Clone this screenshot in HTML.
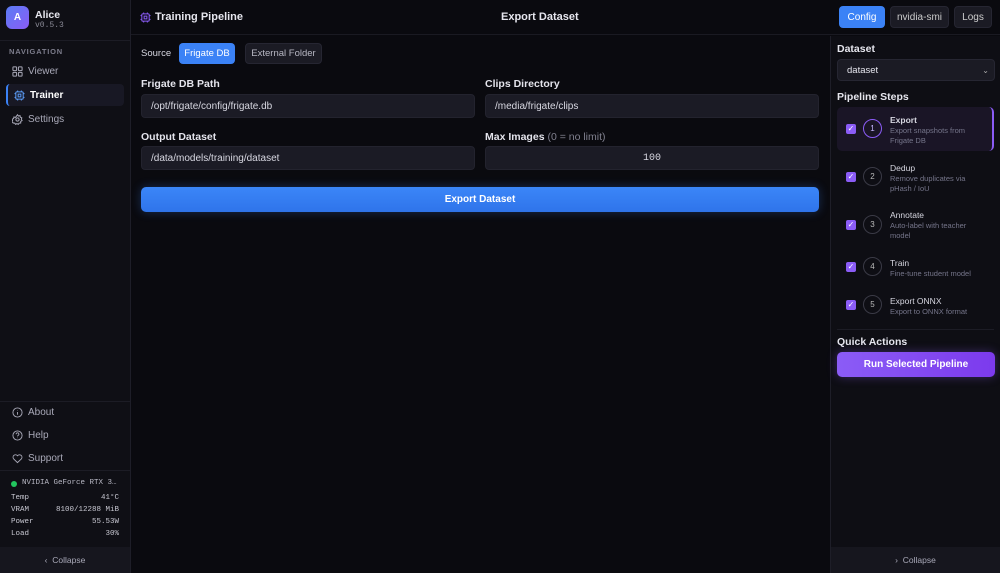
<!DOCTYPE html>
<html><head><meta charset="utf-8"><style>
*{box-sizing:border-box;margin:0;padding:0}
body{width:1000px;height:573px;overflow:hidden;background:#0a0a0f;font-family:"Liberation Sans",sans-serif;color:#e6e6ee;position:relative;font-size:11px}
.mono{font-family:"Liberation Mono",monospace}
.c{display:flex;align-items:center;justify-content:center}
#side{position:absolute;left:0;top:0;width:131px;height:573px;background:#0f0f15;border-right:1px solid #1e1e28}
.logo{position:absolute;left:6px;top:6px;width:23px;height:23px;border-radius:6px;background:linear-gradient(135deg,#5a7cf5,#8b5cf6);color:#fff;font-weight:bold;font-size:10px;text-align:center;line-height:23px}
.nav{position:absolute;left:6px;width:118px;height:22px;display:flex;align-items:center;padding-left:6px;gap:5px;color:#a9a9b8;font-size:10px}
.nav svg{width:11px;height:11px}
#head{position:absolute;left:131px;top:0;width:869px;height:35px;border-bottom:1px solid #1a1a22}
.lbl{position:absolute;font-size:10.5px;font-weight:bold;color:#e4e4ec}
.inp{position:absolute;height:24px;background:#1b1b25;border:1px solid #23232e;border-radius:4px;font-size:10px;color:#d8d8e2;padding-left:9px;display:flex;align-items:center}
#right{position:absolute;left:830px;top:36px;width:170px;height:537px;background:#0e0e14;border-left:1px solid #1e1e28}
.step{position:absolute;left:6px;width:157px;height:42px}
.cb{position:absolute;left:9px;width:10px;height:10px;background:#8b5cf6;border-radius:2px;color:#fff;font-size:8px;line-height:10px;text-align:center}
.num{position:absolute;left:26px;width:19px;height:19px;border:1.5px solid #3a3a46;border-radius:50%;font-size:8px;color:#bbb}
.st{position:absolute;left:53px;font-size:8.5px;color:#d6d6e0}
.sd{position:absolute;left:53px;font-size:7.5px;color:#75758a;line-height:10px;width:88px}
</style></head><body>
<div id="side">
 <div class="logo">A</div>
 <div style="position:absolute;left:35px;top:9px;font-size:10.5px;font-weight:bold">Alice</div>
 <div class="mono" style="position:absolute;left:35px;top:21px;font-size:8px;color:#8a8a96">v0.5.3</div>
 <div style="position:absolute;left:0;top:40px;width:130px;border-top:1px solid #1c1c25"></div>
 <div style="position:absolute;left:9px;top:47px;font-size:7.5px;color:#7d7d8c;letter-spacing:.8px;font-weight:bold">NAVIGATION</div>
 <div class="nav" style="top:60px"><svg viewBox="0 0 12 12" fill="none" stroke="#a9a9b8" stroke-width="1.1"><rect x="1" y="1" width="4" height="4" rx=".7"/><rect x="7" y="1" width="4" height="4" rx=".7"/><rect x="1" y="7" width="4" height="4" rx=".7"/><rect x="7" y="7" width="4" height="4" rx=".7"/></svg>Viewer</div>
 <div class="nav" style="top:84px;background:#181824;border-left:2px solid #3b82f6;border-radius:4px;color:#fff;font-weight:bold"><svg viewBox="0 0 12 12" fill="none" stroke="#5b9cf8" stroke-width="1.1"><rect x="2" y="2" width="8" height="8" rx="1"/><rect x="4.5" y="4.5" width="3" height="3"/><path d="M4 0.5v1.5M8 0.5v1.5M4 10v1.5M8 10v1.5M0.5 4h1.5M0.5 8h1.5M10 4h1.5M10 8h1.5"/></svg>Trainer</div>
 <div class="nav" style="top:108px"><svg viewBox="0 0 12 12" fill="none" stroke="#a9a9b8" stroke-width="1.1"><circle cx="6" cy="6" r="1.8"/><path d="M6 .8l1 1.4 1.7-.4.4 1.7 1.6.7-.6 1.6.9 1.4-1.5.9v1.7l-1.7.1-.9 1.4-1.5-.8-1.5.8-.9-1.4-1.7-.1V9.6l-1.5-.9.9-1.4-.6-1.6 1.6-.7.4-1.7 1.7.4z"/></svg>Settings</div>
 <div style="position:absolute;left:0;top:401px;width:130px;border-top:1px solid #1c1c25"></div>
 <div class="nav" style="top:401px"><svg viewBox="0 0 12 12" fill="none" stroke="#a9a9b8" stroke-width="1"><circle cx="6" cy="6" r="5"/><path d="M6 5.5v3M6 3.5v.5"/></svg>About</div>
 <div class="nav" style="top:424px"><svg viewBox="0 0 12 12" fill="none" stroke="#a9a9b8" stroke-width="1"><circle cx="6" cy="6" r="5"/><path d="M4.5 4.6a1.5 1.5 0 1 1 2 1.4c-.4.2-.5.5-.5.9M6 8.5v.4"/></svg>Help</div>
 <div class="nav" style="top:447px"><svg viewBox="0 0 12 12" fill="none" stroke="#a9a9b8" stroke-width="1"><path d="M6 10.5L1.7 6.3A2.6 2.6 0 0 1 6 3a2.6 2.6 0 0 1 4.3 3.3z"/></svg>Support</div>
 <div style="position:absolute;left:0;top:470px;width:130px;border-top:1px solid #1c1c25"></div>
 <div style="position:absolute;left:11px;top:481px;width:6px;height:6px;border-radius:50%;background:#22c55e"></div>
 <div class="mono" style="position:absolute;left:22px;top:479px;font-size:7.5px;color:#b8b8c4">NVIDIA GeForce RTX 3…</div>
 <div class="mono" style="position:absolute;left:11px;top:492px;width:108px;font-size:7.5px;line-height:12px;color:#c8c8d2">
  <div style="display:flex;justify-content:space-between"><span>Temp</span><span>41°C</span></div>
  <div style="display:flex;justify-content:space-between"><span>VRAM</span><span>8100/12288 MiB</span></div>
  <div style="display:flex;justify-content:space-between"><span>Power</span><span>55.53W</span></div>
  <div style="display:flex;justify-content:space-between"><span>Load</span><span>30%</span></div>
 </div>
 <div class="c" style="position:absolute;left:0;top:547px;width:130px;height:26px;background:#16161e;font-size:8.5px;color:#a9a9b8">‹&nbsp; Collapse</div>
</div>
<div id="head">
 <svg style="position:absolute;left:9px;top:12px" width="11" height="11" viewBox="0 0 12 12" fill="none" stroke="#8b5cf6" stroke-width="1.1"><rect x="2" y="2" width="8" height="8" rx="1"/><rect x="4.5" y="4.5" width="3" height="3"/><path d="M4 0.5v1.5M8 0.5v1.5M4 10v1.5M8 10v1.5M0.5 4h1.5M0.5 8h1.5M10 4h1.5M10 8h1.5"/></svg>
 <div style="position:absolute;left:24px;top:11px;font-size:11px;font-weight:bold">Training Pipeline</div>
 <div style="position:absolute;left:370px;top:11px;font-size:11px;font-weight:bold">Export Dataset</div>
 <div class="c" style="position:absolute;left:708px;top:6px;width:46px;height:22px;background:#3b82f6;border-radius:4px;font-size:10px;color:#fff">Config</div>
 <div class="c" style="position:absolute;left:759px;top:6px;width:59px;height:22px;background:#1b1b24;border:1px solid #262632;border-radius:4px;font-size:10px;color:#ccc">nvidia-smi</div>
 <div class="c" style="position:absolute;left:823px;top:6px;width:38px;height:22px;background:#1b1b24;border:1px solid #262632;border-radius:4px;font-size:10px;color:#ccc">Logs</div>
</div>
<div style="position:absolute;left:141px;top:48px;font-size:9.5px;color:#d8d8e2">Source</div>
<div class="c" style="position:absolute;left:179px;top:43px;width:56px;height:21px;background:#3b82f6;border-radius:4px;font-size:9.5px;color:#fff">Frigate DB</div>
<div class="c" style="position:absolute;left:245px;top:43px;width:77px;height:21px;background:#1b1b24;border:1px solid #262632;border-radius:4px;font-size:9.5px;color:#b8b8c4">External Folder</div>
<div class="lbl" style="left:141px;top:78px">Frigate DB Path</div>
<div class="inp" style="left:141px;top:94px;width:334px">/opt/frigate/config/frigate.db</div>
<div class="lbl" style="left:485px;top:78px">Clips Directory</div>
<div class="inp" style="left:485px;top:94px;width:334px">/media/frigate/clips</div>
<div class="lbl" style="left:141px;top:131px">Output Dataset</div>
<div class="inp" style="left:141px;top:146px;width:334px">/data/models/training/dataset</div>
<div class="lbl" style="left:485px;top:131px">Max Images <span style="font-weight:normal;color:#80808e">(0 = no limit)</span></div>
<div class="inp mono c" style="left:485px;top:146px;width:334px;padding:0">100</div>
<div class="c" style="position:absolute;left:141px;top:187px;width:678px;height:25px;background:linear-gradient(#3b86f8,#2f74ea);border-radius:5px;font-size:10px;font-weight:bold;color:#fff;box-shadow:0 0 10px rgba(59,130,246,.3)">Export Dataset</div>
<div id="right">
 <div style="position:absolute;left:6px;top:7px;font-size:10.5px;font-weight:bold">Dataset</div>
 <div style="position:absolute;left:6px;top:23px;width:158px;height:22px;background:#1b1b24;border:1px solid #262632;border-radius:4px;font-size:9.5px;padding-left:9px;display:flex;align-items:center">dataset<span style="position:absolute;right:5px;font-size:8px;color:#aaa">⌄</span></div>
 <div style="position:absolute;left:6px;top:55px;font-size:10.5px;font-weight:bold">Pipeline Steps</div>
 <div class="step" style="top:71px;height:44px;background:#1a1526;border-right:2px solid #8b5cf6;border-radius:5px">
  <div class="cb" style="top:17px">✓</div><div class="num c" style="top:12px;border-color:#8b5cf6;color:#c4b5fd">1</div>
  <div class="st" style="top:8px;font-weight:bold">Export</div><div class="sd" style="top:19px">Export snapshots from Frigate DB</div></div>
 <div class="step" style="top:120px"><div class="cb" style="top:16px">✓</div><div class="num c" style="top:11px">2</div><div class="st" style="top:7px">Dedup</div><div class="sd" style="top:18px">Remove duplicates via pHash / IoU</div></div>
 <div class="step" style="top:168px"><div class="cb" style="top:16px">✓</div><div class="num c" style="top:11px">3</div><div class="st" style="top:6px">Annotate</div><div class="sd" style="top:17px">Auto-label with teacher model</div></div>
 <div class="step" style="top:216px"><div class="cb" style="top:10px">✓</div><div class="num c" style="top:5px">4</div><div class="st" style="top:6px">Train</div><div class="sd" style="top:17px;width:100px">Fine-tune student model</div></div>
 <div class="step" style="top:254px"><div class="cb" style="top:10px">✓</div><div class="num c" style="top:5px">5</div><div class="st" style="top:6px">Export ONNX</div><div class="sd" style="top:17px;width:100px">Export to ONNX format</div></div>
 <div style="position:absolute;left:6px;top:293px;width:157px;border-top:1px solid #1c1c25"></div>
 <div style="position:absolute;left:6px;top:300px;font-size:10.5px;font-weight:bold">Quick Actions</div>
 <div class="c" style="position:absolute;left:6px;top:316px;width:158px;height:25px;background:linear-gradient(90deg,#8b5cf6,#7c3aed);border-radius:5px;font-size:10px;font-weight:bold;color:#fff;box-shadow:0 0 10px rgba(139,92,246,.35)">Run Selected Pipeline</div>
 <div class="c" style="position:absolute;left:0;top:511px;width:169px;height:26px;background:#16161e;font-size:8.5px;color:#a9a9b8">›&nbsp; Collapse</div>
</div>
</body></html>
